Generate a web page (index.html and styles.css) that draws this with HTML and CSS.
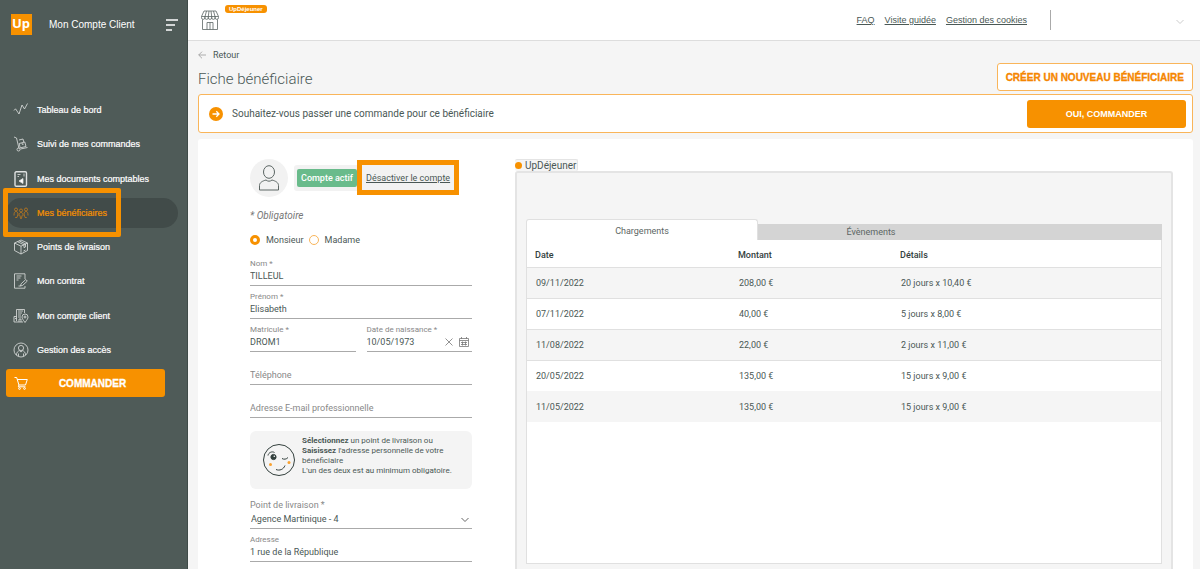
FILE: index.html
```html
<!DOCTYPE html>
<html lang="fr">
<head>
  <meta charset="UTF-8">
  <title>Mon Compte Client - Fiche bénéficiaire</title>
  <link rel="stylesheet" href="styles.css">
</head>
<body>
  <aside class="sidebar">
    <div class="brand">
      <svg class="logo" viewBox="0 0 21 21"><rect width="21" height="21" fill="#f79100"/><text x="10" y="14" text-anchor="middle">Up</text></svg>
      <span class="brand-name">Mon Compte Client</span>
      <button class="menu-btn" aria-label="Menu">
        <svg width="12" height="12" viewBox="0 0 12 12"><path d="M0 1h12M0 6h9M0 11h6" stroke="#fff" stroke-width="1.500"/></svg>
      </button>
    </div>
    <nav class="nav">
      <a href="#" class="nav-item">
        <svg viewBox="0 0 16 16"><path d="M1 8.500l1.500-1.700L6 12l3-9 2.500 4 3-5.500"/></svg>
        Tableau de bord
      </a>
      <a href="#" class="nav-item">
        <svg viewBox="0 0 16 16"><path d="M1 1l2.500 1L6 12.500M7.500 13L14.500 11.500"/><circle cx="5.500" cy="13.500" r="1.500"/><path d="M6.200 7.500l5.600-1.500 1.200 4.500-5.800 1.400zM6 4l4-1 .8 3.200M9 7l.4 1.500 1.300-.4"/></svg>
        Suivi de mes commandes
      </a>
      <a href="#" class="nav-item">
        <svg viewBox="0 0 16 16"><rect x="2" y=".8" width="11.500" height="14.500" rx="1.200" class="thick"/><path d="M4.500 3.500h3M4.500 5.500h1.500M11 2.500v3"/><path class="solid" d="M10 7.500v5l-4-2.500z"/></svg>
        Mes documents comptables
      </a>
      <a href="#" class="nav-item active">
        <svg viewBox="0 0 16 16"><circle cx="3" cy="4.500" r="1.500"/><circle cx="8" cy="5.500" r="1.500"/><circle cx="13" cy="4.500" r="1.500"/><path d="M1 10.500c0-3 .7-4 2-4s1.700 1 2 2.500L4 12.500H2.200M15 10.500c0-3-.7-4-2-4s-1.700 1-2 2.500l1 3.500h1.800M6 11c0-2.500.7-3.500 2-3.500s2 1 2 3.500M7 10.500l.5 3h1l.5-3"/></svg>
        Mes bénéficiaires
      </a>
      <a href="#" class="nav-item">
        <svg viewBox="0 0 16 16"><path d="M8 1l6.500 3v7.500L8 15l-6.500-3.500V4zM1.500 4L8 7.200 14.500 4M8 7.200V15M4.500 2.700l6.500 3.200v2.800l1.500-.8V5M6.200 1.900l6.500 3.100M10.500 12l2-1"/></svg>
        Points de livraison
      </a>
      <a href="#" class="nav-item">
        <svg viewBox="0 0 16 16"><path d="M12 6V.8H1.500v14.400H12V13M3.500 3h5M3.500 5h4M3.500 7h2"/><path d="M7.500 13l.6-2.200 4.700-4.300 1.500 1.600-4.700 4.300zM5.500 13h2"/></svg>
        Mon contrat
      </a>
      <a href="#" class="nav-item">
        <svg viewBox="0 0 16 16"><path d="M3.500 13V1.500h8V5M5 3h5M5 5h4M5 7h3M5 9h3M1 14h9M1 14V8.500h2.500M2 10.500h1.500M6 14v-3h2v3"/><path d="M12 14.500c-2-2.800-3-4-3-5.500a3 3 0 0 1 6 0c0 1.500-1 2.700-3 5.500z"/><circle cx="12" cy="9" r="1"/></svg>
        Mon compte client
      </a>
      <a href="#" class="nav-item">
        <svg viewBox="0 0 16 16"><circle cx="8" cy="8" r="7"/><circle cx="8" cy="6" r="2.600"/><path d="M3.500 13c0-2.500 1.300-4 3-4.300L8 10l1.500-1.300c1.700.3 3 1.800 3 4.300M5.500 11.500v2.800M10.500 11.500v2.800"/></svg>
        Gestion des accès
      </a>
    </nav>
    <button class="btn btn-large order-btn">
      <svg viewBox="0 0 14 14"><path d="M.5 1.500h2.200l2.200 7.500h6.600l1.800-5.500H3.300M4.900 9l-.6 1.800h7.200"/><circle cx="5.500" cy="12.500" r=".9"/><circle cx="10.500" cy="12.500" r=".9"/></svg>
      <span>COMMANDER</span>
    </button>
  </aside>

  <div class="page">
    <header class="topbar">
      <svg class="shop" viewBox="0 0 18 20"><path d="M3 1h12l2.500 5.500H.5zM5.500 1L4 6.500M8 1l-.7 5.500M10 1l.7 5.500M12.500 1L14 6.500M.5 6.500v1.200a1.700 1.700 0 0 0 3.400 0V6.500v1.200a1.700 1.700 0 0 0 3.400 0V6.500v1.200a1.700 1.700 0 0 0 3.400 0V6.500v1.200a1.700 1.700 0 0 0 3.400 0V6.500v1.200a1.700 1.700 0 0 0 3.400 0V6.500M1.500 9.500v10h15v-10M6 19.500v-7h6v7M9 12.500v7"/></svg>
      <span class="product-badge">UpDéjeuner</span>
      <nav class="top-links">
        <a href="#">FAQ</a>
        <a href="#">Visite guidée</a>
        <a href="#">Gestion des cookies</a>
      </nav>
      <button class="account-btn" aria-label="Compte">
        <svg width="8" height="6" viewBox="0 0 8 6"><path d="M.5 1L4 4.500 7.500 1" fill="none" stroke="#ccc"/></svg>
      </button>
    </header>

    <main class="content">
      <div class="page-head">
        <div>
          <a href="#" class="back">
            <svg width="8" height="8" viewBox="0 0 8 8"><path d="M8 4H.7M4 .7L.7 4 4 7.300" fill="none" stroke="#999" stroke-width=".8"/></svg>
            Retour
          </a>
          <h1>Fiche bénéficiaire</h1>
        </div>
        <button class="btn btn-large btn-outline">CRÉER UN NOUVEAU BÉNÉFICIAIRE</button>
      </div>

      <section class="banner">
        <svg width="14" height="14" viewBox="0 0 14 14"><circle cx="7" cy="7" r="7" fill="#f79100"/><path d="M3.500 7h6.500M7.300 4.300L10 7 7.300 9.700" fill="none" stroke="#fff" stroke-width="1.300"/></svg>
        <p>Souhaitez-vous passer une commande pour ce bénéficiaire</p>
        <button class="btn">OUI, COMMANDER</button>
      </section>

      <section class="card">
        <form class="form">
          <div class="status-row">
            <span class="avatar">
              <svg width="22" height="26" viewBox="0 0 22 26"><ellipse cx="11" cy="7" rx="5.500" ry="6.300"/><path d="M1.500 25v-4.500c0-3 3-4.500 6.500-5.500 2 1.600 4 1.600 6 0 3.500 1 6.500 2.500 6.500 5.500V25z"/></svg>
            </span>
            <div class="status">
              <span class="badge">Compte actif</span>
              <a href="#" class="disable-link">Désactiver le compte</a>
            </div>
          </div>
          <p class="required">* Obligatoire</p>
          <div class="radios">
            <label><input type="radio" name="civilite" checked>Monsieur</label>
            <label><input type="radio" name="civilite">Madame</label>
          </div>

          <div class="field">
            <label for="nom">Nom *</label>
            <input type="text" id="nom" value="TILLEUL">
          </div>
          <div class="field">
            <label for="prenom">Prénom *</label>
            <input type="text" id="prenom" value="Elisabeth">
          </div>
          <div class="field-row">
            <div class="field">
              <label for="matricule">Matricule *</label>
              <input type="text" id="matricule" value="DROM1">
            </div>
            <div class="field">
              <label for="naissance">Date de naissance *</label>
              <div class="date-box">
                <input type="text" id="naissance" value="10/05/1973">
                <button type="button" aria-label="Effacer"><svg width="8" height="8" viewBox="0 0 8 8"><path d="M.5.5l7 7M7.500.5l-7 7"/></svg></button>
                <button type="button" aria-label="Calendrier"><svg width="10" height="10" viewBox="0 0 10 10"><path d="M.5 1.500h9v8h-9zM.5 3.500h9M2.500 0v2M7.500 0v2M2 5.500h6M2 7.500h6M3.500 4.500v4M6.500 4.500v4"/></svg></button>
              </div>
            </div>
          </div>
          <div class="field">
            <input type="tel" id="telephone" placeholder="Téléphone" aria-label="Téléphone">
          </div>
          <div class="field">
            <input type="email" id="email" placeholder="Adresse E-mail professionnelle" aria-label="Adresse E-mail professionnelle">
          </div>

          <div class="notice">
            <svg class="smiley" viewBox="0 0 34 34"><circle cx="17" cy="17" r="15.500"/><path d="M6 12.500c.5-3 4-4.500 6.500-3M20 15.500c1.800 1.200 4.500.8 6-1M14 26.500c3.500 1.500 7.500 0 9-4"/><circle cx="11.500" cy="14" r="2.600" class="eye"/><circle cx="12.300" cy="13.300" r=".8" class="shine"/><circle cx="8.500" cy="21.500" r="1.500" class="cheek"/><circle cx="27" cy="19.500" r="1.500" class="cheek"/></svg>
            <p><b>Sélectionnez</b> un point de livraison ou <b>Saisissez</b> l'adresse personnelle de votre bénéficiaire<br>L'un des deux est au minimum obligatoire.</p>
          </div>

          <div class="field field-select">
            <label for="livraison">Point de livraison *</label>
            <select id="livraison"><option>Agence Martinique - 4</option></select>
            <svg class="arrow" width="8" height="6" viewBox="0 0 8 6"><path d="M.5 1L4 4.500 7.500 1"/></svg>
          </div>
          <div class="field">
            <label for="adresse">Adresse</label>
            <input type="text" id="adresse" value="1 rue de la République">
          </div>
        </form>

        <div class="product">
          <h2>UpDéjeuner</h2>
          <div class="panel">
            <div class="tabs">
              <button class="tab active">Chargements</button>
              <button class="tab">Évènements</button>
            </div>
            <div class="panel-body">
              <table>
                <thead>
                  <tr><th class="col-date">Date</th><th class="col-amount">Montant</th><th>Détails</th></tr>
                </thead>
                <tbody>
                  <tr><td>09/11/2022</td><td>208,00 €</td><td>20 jours x 10,40 €</td></tr>
                  <tr><td>07/11/2022</td><td>40,00 €</td><td>5 jours x 8,00 €</td></tr>
                  <tr><td>11/08/2022</td><td>22,00 €</td><td>2 jours x 11,00 €</td></tr>
                  <tr><td>20/05/2022</td><td>135,00 €</td><td>15 jours x 9,00 €</td></tr>
                  <tr><td>11/05/2022</td><td>135,00 €</td><td>15 jours x 9,00 €</td></tr>
                </tbody>
              </table>
            </div>
          </div>
        </div>
      </section>
    </main>
  </div>
</body>
</html>
```
FILE: styles.css
```css
*, *::before, *::after {
  box-sizing: border-box;
}
body {
  margin: 0;
  min-height: 100vh;
  display: flex;
  background-color: #f5f5f5;
  color: #4a5855;
  font-family: Roboto, "Liberation Sans", sans-serif;
  font-size: 9px;
}
h1, h2, p {
  margin: 0;
  font-weight: 400;
}
a {
  color: inherit;
}
button {
  padding: 0;
  border: 0;
  background: none;
  font-family: inherit;
  cursor: pointer;
}

/* sidebar */
.sidebar {
  width: 188px;
  flex-shrink: 0;
  padding: 14px 9px 0 6px;
  background-color: #4f5b58;
  border-right: 1px solid #3f4b48;
  color: #fff;
  font-family: "Liberation Sans", Arial, sans-serif;
}
.brand {
  display: flex;
  align-items: center;
  padding-left: 5px;
  margin-bottom: 60px;
}
.logo {
  width: 21px;
  height: 21px;
}
.logo text {
  fill: #fff;
  font: 700 13px "Open Sans", sans-serif;
}
.brand-name {
  margin-left: 17px;
  font-size: 10px;
}
.menu-btn {
  margin-left: auto;
  display: flex;
}
.nav {
  display: flex;
  flex-direction: column;
  justify-content: space-between;
  height: 270px;
}
.nav-item {
  position: relative;
  display: flex;
  align-items: center;
  gap: 8px;
  height: 30px;
  padding-left: 7px;
  border-radius: 15px;
  text-decoration: none;
  -webkit-text-stroke: 0.2px;
}
.nav-item svg {
  width: 16px;
  height: 16px;
  fill: none;
  stroke: #dfe2e1;
  stroke-width: 0.8;
}
.nav-item .thick {
  stroke-width: 1.4;
}
.nav-item .solid {
  fill: #fff;
}
.nav-item.active {
  background-color: #414b49;
  color: #f79100;
}
.nav-item.active svg {
  stroke: #c07a1c;
}
.nav-item.active::after {
  content: "";
  position: absolute;
  top: -10px;
  left: -3px;
  width: 118px;
  height: 49px;
  border: 5px solid #f79100;
  border-radius: 2px;
}
.btn {
  height: 28px;
  border-radius: 3px;
  background-color: #f79100;
  color: #fff;
  font: 700 9px "Liberation Sans", Arial, sans-serif;
}
.btn-large {
  font-size: 10px;
  -webkit-text-stroke: 0.3px;
}
.order-btn {
  display: flex;
  align-items: center;
  width: 159px;
  margin-top: 4px;
  padding: 0 8px;
}
.order-btn svg {
  width: 14px;
  height: 14px;
  fill: none;
  stroke: #fff;
}
.order-btn span {
  flex: 1;
}

/* top bar */
.page {
  flex: 1;
  min-width: 0;
  display: flex;
  flex-direction: column;
}
.topbar {
  display: flex;
  align-items: center;
  height: 41px;
  padding: 0 16px 0 13px;
  background-color: #fff;
  border-bottom: 1px solid #ddd;
}
.shop {
  width: 18px;
  height: 20px;
  fill: none;
  stroke: #5c6664;
  stroke-width: 0.8;
}
.product-badge {
  align-self: flex-start;
  margin: 5px 0 0 6px;
  padding: 0 4px;
  border-radius: 3px;
  background-color: #f79100;
  color: #fff;
  font: 700 6px/8px "Liberation Sans", Arial, sans-serif;
}
.top-links {
  display: flex;
  gap: 10px;
  margin-left: auto;
  font-family: "Liberation Sans", Arial, sans-serif;
}
.account-btn {
  width: 134px;
  height: 20px;
  margin-left: 23px;
  border-left: 1px solid #aaa;
  text-align: right;
}

/* page head */
.content {
  flex: 1;
  display: flex;
  flex-direction: column;
  padding: 8px 7px 0 10px;
}
.page-head {
  display: flex;
  justify-content: space-between;
  align-items: flex-end;
  margin-bottom: 3px;
}
.back {
  display: flex;
  align-items: center;
  gap: 7px;
  line-height: 12px;
  text-decoration: none;
}
h1 {
  margin: 8px 0 2px;
  font-size: 15px;
  line-height: 20px;
  font-weight: 300;
}
.btn-outline {
  padding: 0 8px;
  border: 1px solid #f9b55a;
  background-color: #fff;
  color: #f58600;
}
.banner {
  display: flex;
  align-items: center;
  gap: 9px;
  height: 39px;
  padding: 0 6px 0 10px;
  border: 1px solid #f9b55a;
  border-radius: 3px;
  background-color: #fff;
  font-size: 10px;
}
.banner .btn {
  width: 159px;
  margin-left: auto;
}

/* card */
.card {
  flex: 1;
  display: grid;
  grid-template-columns: 222px 1fr;
  gap: 43px;
  margin-top: 6px;
  padding: 20px 20px 0 52px;
  border-radius: 3px 3px 0 0;
  background-color: #fff;
}
.status-row {
  display: flex;
  align-items: center;
  gap: 6px;
}
.avatar {
  display: flex;
  align-items: center;
  justify-content: center;
  width: 38px;
  height: 38px;
  border-radius: 50%;
  background-color: #f2f2f2;
}
.avatar svg {
  fill: none;
  stroke: #5c6664;
}
.status {
  display: flex;
  align-items: center;
  height: 26px;
  padding: 0 6px 0 3px;
  border-radius: 3px;
  background-color: #f2f2f2;
  white-space: nowrap;
}
.badge {
  width: 60px;
  border-radius: 2px;
  background-color: #69bb8b;
  color: #fff;
  font-weight: 500;
  line-height: 18px;
  text-align: center;
}
.disable-link {
  position: relative;
  margin-left: 9px;
}
.disable-link::after {
  content: "";
  position: absolute;
  top: -13px;
  left: -9px;
  width: 102px;
  height: 35px;
  border: 5px solid #f79100;
}
.required {
  margin-top: 13px;
  color: #777;
  font-size: 10px;
  font-style: italic;
  line-height: 12px;
}
.radios {
  display: flex;
  gap: 5px;
  margin: 12px 0 12px;
}
.radios label {
  display: flex;
  align-items: center;
  gap: 6px;
  line-height: 12px;
}
.radios input {
  appearance: none;
  width: 10px;
  height: 10px;
  margin: 0;
  border: 1px solid #f9b55a;
  border-radius: 50%;
}
.radios input:checked {
  border: 3px solid #f79100;
}

/* fields */
.field {
  position: relative;
  display: flex;
  flex-direction: column;
  justify-content: flex-end;
  height: 33px;
  padding-bottom: 3px;
  border-bottom: 1px solid #aaa;
}
.radios + .field {
  height: 28px;
}
.field label {
  color: #888;
  font-size: 8px;
  line-height: 10px;
}
.field input, .field select {
  width: 100%;
  min-width: 0;
  height: 13px;
  padding: 0;
  border: 0;
  outline: 0;
  background: none;
  color: #4a5855;
  font-family: inherit;
  font-size: 9px;
}
.field input::placeholder {
  color: #888;
}
.field select {
  appearance: none;
  padding-left: 1px;
}
.field-select label {
  font-size: 9px;
  line-height: 14px;
}
.field-row {
  display: grid;
  grid-template-columns: 1fr 1fr;
  gap: 11px;
}
.date-box {
  display: flex;
  align-items: center;
  gap: 6px;
  padding-right: 3px;
}
.date-box button {
  display: flex;
}
.date-box svg {
  fill: none;
  stroke: #777;
  stroke-width: 0.8;
}
.field-select .arrow {
  position: absolute;
  right: 3px;
  bottom: 5px;
  fill: none;
  stroke: #666;
  pointer-events: none;
}
.notice {
  display: flex;
  align-items: center;
  gap: 6px;
  height: 58px;
  margin: 13px 0 7px;
  padding: 0 12px;
  border-radius: 6px;
  background-color: #f4f4f4;
  font-size: 8px;
}
.notice p {
  padding-bottom: 9px;
  line-height: 10px;
}
.smiley {
  flex-shrink: 0;
  width: 34px;
  height: 34px;
  fill: none;
  stroke: #33403d;
}
.smiley .eye {
  fill: #33403d;
}
.smiley .shine {
  fill: #fff;
  stroke: none;
}
.smiley .cheek {
  fill: #f9a130;
  stroke: none;
}

/* product panel */
.product {
  display: flex;
  flex-direction: column;
  min-width: 0;
}
h2 {
  display: flex;
  align-items: center;
  align-self: flex-start;
  gap: 3px;
  padding-right: 1px;
  border: 1px solid #e4e4e4;
  border-width: 1px 1px 0 0;
  border-radius: 2px;
  background-color: #f5f5f5;
  font-size: 10px;
  line-height: 11px;
}
h2::before {
  content: "";
  width: 7px;
  height: 7px;
  border-radius: 50%;
  background-color: #f79100;
}
.panel {
  flex: 1;
  display: flex;
  flex-direction: column;
  padding: 46px 9px 5px;
  border: 2px solid #e4e4e4;
  border-bottom: 0;
  border-radius: 3px 3px 0 0;
  background-color: #f5f5f5;
}
.tabs {
  display: flex;
  align-items: flex-end;
  background: linear-gradient(#d4d4d4, #d4d4d4) bottom / 100% 16px no-repeat;
}
.tab {
  width: 226px;
  height: 16px;
  color: #5c6664;
  font-size: 9px;
}
.tab.active {
  width: 232px;
  height: 21px;
  padding-top: 2px;
  border: 1px solid #e0e0e0;
  border-bottom: 0;
  border-radius: 3px 3px 0 0;
  background-color: #fff;
}
.panel-body {
  flex: 1;
  border: 1px solid #e0e0e0;
  border-top: 0;
  background-color: #fff;
}
table {
  width: 100%;
  border-collapse: collapse;
  text-align: left;
}
th {
  height: 27px;
  padding: 4px 8px 0;
  font-weight: 500;
  color: #33403d;
}
td {
  height: 31px;
  padding: 0 9px;
  border-top: 1px solid #e0e0e0;
}
.col-date {
  width: 203px;
}
.col-amount {
  width: 162px;
}
tbody tr:nth-child(odd) {
  background-color: #f5f5f5;
}
tbody tr:last-child td {
  border-top: 0;
}
```
